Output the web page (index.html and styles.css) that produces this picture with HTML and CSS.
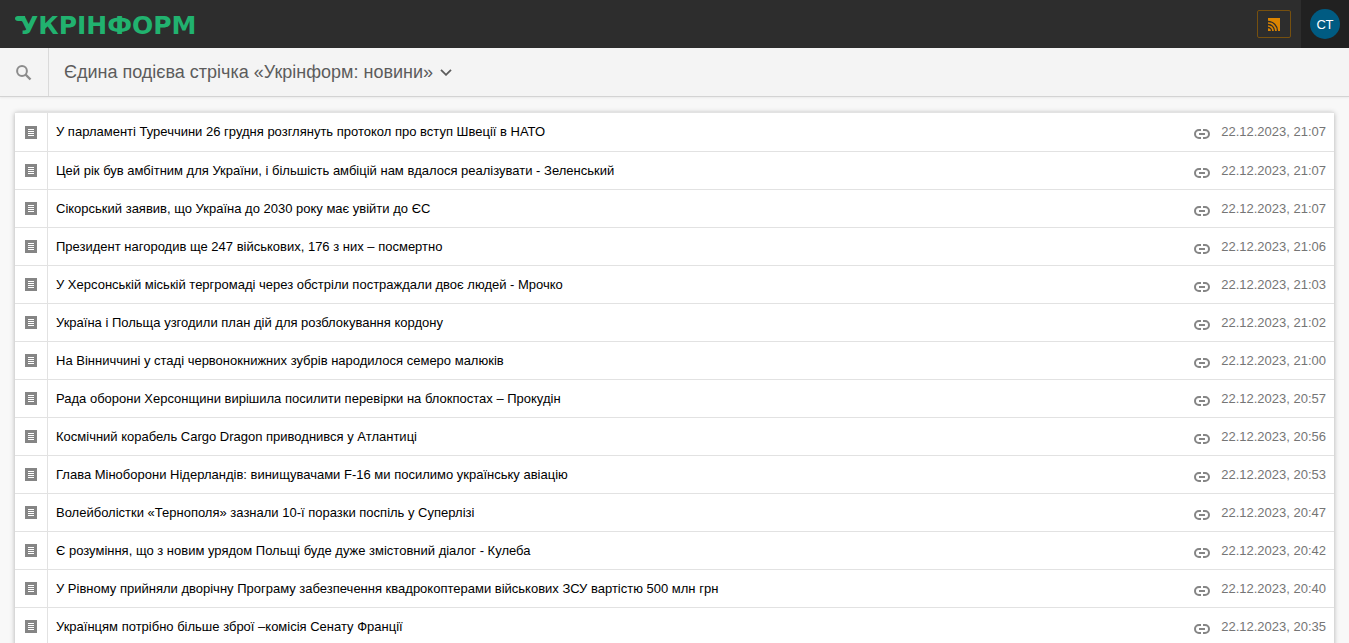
FILE: index.html
```html
<!DOCTYPE html>
<html lang="uk">
<head>
<meta charset="utf-8">
<title>Укрінформ</title>
<link rel="stylesheet" href="styles.css">
</head>
<body>
<svg class="sprite" aria-hidden="true">
  <symbol id="doc" viewBox="0 0 12 13"><path fill="#858585" d="M0 0h12v13H0z"/><path fill="#fff" d="M3 3h6v1H3zM3 5h6v1H3zM3 7h6v1H3zM3 9h6v1H3z"/></symbol>
  <symbol id="link" viewBox="0 0 16 10"><path fill="none" stroke="#858585" stroke-width="2" d="M7 1H5a4 4 0 0 0 0 8h2M9 1h2a4 4 0 0 1 0 8H9M5 5h6"/></symbol>
</svg>
<header class="topbar">
  <a class="logo" href="#">УКРІНФОРМ<svg class="logo-curl" viewBox="0 0 10 7" aria-hidden="true"><path fill="#21b26f" d="M3 0h7v7C9 6 8 5 6 5H3C1 5 0 4 0 2.500S1 0 3 0z"/></svg></a>
  <div class="actions">
    <button class="rss" type="button" aria-label="RSS"><svg width="12" height="13" viewBox="0 0 12 13"><path fill="#dd8500" d="M0 0h12v13H0z"/><g fill="none" stroke="#2d2d2d" stroke-width="1.300"><path d="M0 9.500a3.500 3.500 0 0 1 3.500 3.500M0 6.500a6.500 6.500 0 0 1 6.500 6.500M0 3.500a9.500 9.500 0 0 1 9.500 9.500"/></g></svg></button>
    <div class="account"><button class="avatar" type="button">СТ</button></div>
  </div>
</header>
<nav class="subbar">
  <button class="search" type="button" aria-label="Пошук"><svg width="16" height="16" viewBox="0 0 16 16" fill="none" stroke="#8c8c8c"><circle cx="6" cy="6" r="4.900" stroke-width="2"/><path d="M9.500 9.500l5 5" stroke-width="2.400"/></svg></button>
  <button class="feed" type="button">Єдина подієва стрічка «Укрінформ: новини»<svg width="12" height="8" viewBox="0 0 12 8" fill="none" stroke="#5c5c5c" stroke-width="1.800"><path d="M1 1.800l5 5 5-5"/></svg></button>
</nav>
<main class="content">
<table class="news">
<tbody>
<tr><td class="kind"><svg><use href="#doc"/></svg></td><td class="title">У парламенті Туреччини 26 грудня розглянуть протокол про вступ Швеції в НАТО</td><td class="share"><a href="#" aria-label="Посилання"><svg><use href="#link"/></svg></a></td><td class="date">22.12.2023, 21:07</td></tr>
<tr><td class="kind"><svg><use href="#doc"/></svg></td><td class="title">Цей рік був амбітним для України, і більшість амбіцій нам вдалося реалізувати - Зеленський</td><td class="share"><a href="#" aria-label="Посилання"><svg><use href="#link"/></svg></a></td><td class="date">22.12.2023, 21:07</td></tr>
<tr><td class="kind"><svg><use href="#doc"/></svg></td><td class="title">Сікорський заявив, що Україна до 2030 року має увійти до ЄС</td><td class="share"><a href="#" aria-label="Посилання"><svg><use href="#link"/></svg></a></td><td class="date">22.12.2023, 21:07</td></tr>
<tr><td class="kind"><svg><use href="#doc"/></svg></td><td class="title">Президент нагородив ще 247 військових, 176 з них – посмертно</td><td class="share"><a href="#" aria-label="Посилання"><svg><use href="#link"/></svg></a></td><td class="date">22.12.2023, 21:06</td></tr>
<tr><td class="kind"><svg><use href="#doc"/></svg></td><td class="title">У Херсонській міській тергромаді через обстріли постраждали двоє людей - Мрочко</td><td class="share"><a href="#" aria-label="Посилання"><svg><use href="#link"/></svg></a></td><td class="date">22.12.2023, 21:03</td></tr>
<tr><td class="kind"><svg><use href="#doc"/></svg></td><td class="title">Україна і Польща узгодили план дій для розблокування кордону</td><td class="share"><a href="#" aria-label="Посилання"><svg><use href="#link"/></svg></a></td><td class="date">22.12.2023, 21:02</td></tr>
<tr><td class="kind"><svg><use href="#doc"/></svg></td><td class="title">На Вінниччині у стаді червонокнижних зубрів народилося семеро малюків</td><td class="share"><a href="#" aria-label="Посилання"><svg><use href="#link"/></svg></a></td><td class="date">22.12.2023, 21:00</td></tr>
<tr><td class="kind"><svg><use href="#doc"/></svg></td><td class="title">Рада оборони Херсонщини вирішила посилити перевірки на блокпостах – Прокудін</td><td class="share"><a href="#" aria-label="Посилання"><svg><use href="#link"/></svg></a></td><td class="date">22.12.2023, 20:57</td></tr>
<tr><td class="kind"><svg><use href="#doc"/></svg></td><td class="title">Космічний корабель Cargo Dragon приводнився у Атлантиці</td><td class="share"><a href="#" aria-label="Посилання"><svg><use href="#link"/></svg></a></td><td class="date">22.12.2023, 20:56</td></tr>
<tr><td class="kind"><svg><use href="#doc"/></svg></td><td class="title">Глава Міноборони Нідерландів: винищувачами F-16 ми посилимо українську авіацію</td><td class="share"><a href="#" aria-label="Посилання"><svg><use href="#link"/></svg></a></td><td class="date">22.12.2023, 20:53</td></tr>
<tr><td class="kind"><svg><use href="#doc"/></svg></td><td class="title">Волейболістки «Тернополя» зазнали 10-ї поразки поспіль у Суперлізі</td><td class="share"><a href="#" aria-label="Посилання"><svg><use href="#link"/></svg></a></td><td class="date">22.12.2023, 20:47</td></tr>
<tr><td class="kind"><svg><use href="#doc"/></svg></td><td class="title">Є розуміння, що з новим урядом Польщі буде дуже змістовний діалог - Кулеба</td><td class="share"><a href="#" aria-label="Посилання"><svg><use href="#link"/></svg></a></td><td class="date">22.12.2023, 20:42</td></tr>
<tr><td class="kind"><svg><use href="#doc"/></svg></td><td class="title">У Рівному прийняли дворічну Програму забезпечення квадрокоптерами військових ЗСУ вартістю 500 млн грн</td><td class="share"><a href="#" aria-label="Посилання"><svg><use href="#link"/></svg></a></td><td class="date">22.12.2023, 20:40</td></tr>
<tr><td class="kind"><svg><use href="#doc"/></svg></td><td class="title">Українцям потрібно більше зброї –комісія Сенату Франції</td><td class="share"><a href="#" aria-label="Посилання"><svg><use href="#link"/></svg></a></td><td class="date">22.12.2023, 20:35</td></tr>
</tbody>
</table>
</main>
</body>
</html>
```
FILE: styles.css
```css
* { box-sizing: border-box; }
html { height: 100%; }
body {
  margin: 0;
  height: 100%;
  overflow: hidden;
  background: #f8f8f8;
  font: 13px/16px "Liberation Sans", Arial, sans-serif;
  color: #000;
}
button { border: 0; padding: 0; background: none; font: inherit; cursor: pointer; }
svg { display: block; }
.sprite { display: none; }
.topbar {
  display: flex;
  justify-content: space-between;
  align-items: center;
  height: 48px;
  padding-left: 15px;
  background: #2d2d2d;
}
.logo {
  position: relative;
  padding: 4px 0 0 4px;
  color: #21b26f;
  font: bold 25px/32px "DejaVu Sans", sans-serif;
  text-decoration: none;
}
.logo-curl { position: absolute; left: 0; top: 10px; width: 10px; height: 7px; }
.actions { display: flex; align-items: center; gap: 10px; height: 100%; }
.rss {
  display: flex;
  align-items: center;
  justify-content: center;
  width: 34px;
  height: 28px;
  border: 1px solid #76500f;
  border-radius: 2px;
}
.account { display: flex; align-items: center; height: 100%; padding: 0 9px; background: #212121; }
.avatar { width: 30px; height: 30px; padding-top: 2px; border-radius: 50%; background: #005b82; color: #fff; }
.subbar {
  display: flex;
  height: 49px;
  background: #f4f4f4;
  border-bottom: 1px solid #d3d3d3;
  box-shadow: 0 1px 2px rgba(0, 0, 0, .06);
}
.search { display: flex; align-items: center; width: 49px; padding: 2px 0 0 16px; border-right: 1px solid #dadada; }
.feed { display: flex; align-items: center; gap: 7px; padding: 0 15px; font-size: 18px; color: #5c5c5c; }
.content { padding: 15px; }
.news {
  width: 100%;
  border-spacing: 0;
  border-top: 1px solid #e2e2e2;
  background: #fff;
  box-shadow: 0 1px 5px rgba(0, 0, 0, .3);
}
.news td { height: 38px; padding: 0; border-bottom: 1px solid #e2e2e2; vertical-align: middle; }
.news tr:first-child td { height: 39px; }
.news .kind { width: 33px; padding-left: 10px; border-right: 1px solid #e2e2e2; }
.kind svg { width: 12px; height: 13px; }
.news .title { padding: 0 8px; }
.news .share { width: 16px; padding-top: 4px; }
.share svg { width: 16px; height: 10px; }
.news .date { width: 124px; padding: 0 8px 0 0; color: #757575; text-align: right; white-space: nowrap; }
```
